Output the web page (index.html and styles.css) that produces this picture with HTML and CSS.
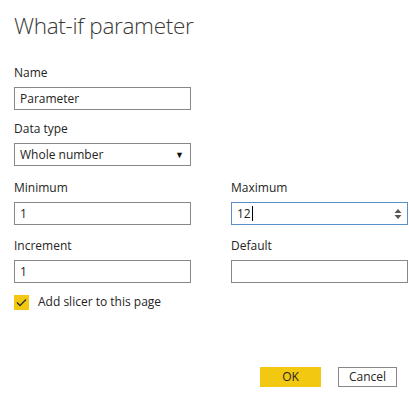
FILE: index.html
```html
<!DOCTYPE html>
<html>
<head>
<meta charset="utf-8">
<link rel="stylesheet" href="styles.css">
</head>
<body>
<div class="dialog">
  <h1 class="title">What-if parameter</h1>
  <div class="field name-field">
    <div class="label">Name</div>
    <div class="input">Parameter</div>
  </div>
  <div class="field">
    <div class="label">Data type</div>
    <div class="input select">Whole number<span class="caret">▼</span></div>
  </div>
  <div class="grid">
    <div class="field">
      <div class="label">Minimum</div>
      <div class="input">1</div>
    </div>
    <div class="field">
      <div class="label">Maximum</div>
      <div class="input focused">12<span class="cursor"></span>
        <svg class="spin" width="8" height="12" viewBox="0 0 8 12"><path d="M4 1 L7.5 5 H0.5 Z M4 11 L7.5 7 H0.5 Z" fill="#555"/></svg>
      </div>
    </div>
    <div class="field">
      <div class="label">Increment</div>
      <div class="input">1</div>
    </div>
    <div class="field">
      <div class="label">Default</div>
      <div class="input"></div>
    </div>
  </div>
  <div class="check-row">
    <span class="checkbox"><svg width="11" height="9" viewBox="0 0 11 9"><path d="M1 4.5 L4 7.5 L10 1.5" fill="none" stroke="#333" stroke-width="1.4"/></svg></span>
    <span>Add slicer to this page</span>
  </div>
  <div class="actions">
    <button class="btn ok">OK</button>
    <button class="btn cancel">Cancel</button>
  </div>
</div>
</body>
</html>
```
FILE: styles.css
```css
* { box-sizing: border-box; }
html, body { margin: 0; padding: 0; background: #fff; }
body {
  font-family: "Open Sans", "Noto Sans", sans-serif;
  font-size: 12px;
  color: #252423;
  width: 409px;
  height: 404px;
  overflow: hidden;
}
.dialog {
  padding: 9px 1px 0 14px;
}
.title {
  margin: 0 0 22px 0;
  font-weight: 300;
  font-size: 22.5px;
  line-height: 34px;
  color: #3b3a39;
  letter-spacing: -0.3px;
}
.field { width: 177px; }
.name-field { margin-bottom: 11px; }
.label {
  line-height: 16px;
  margin-bottom: 6px;
  color: #252423;
}
.input {
  height: 23px;
  border: 1px solid #8a8886;
  padding: 0 5px;
  line-height: 21px;
  position: relative;
  display: flex;
  align-items: center;
}
.select { justify-content: space-between; padding-right: 6px; }
.caret { font-size: 9px; color: #111; }
.grid {
  margin-top: 14px;
  display: grid;
  grid-template-columns: 177px 177px;
  column-gap: 40px;
  row-gap: 13px;
}
.focused { border-color: #5b8fc9; }
.cursor {
  display: inline-block;
  width: 1px;
  height: 15px;
  background: #000;
  margin-left: 1px;
}
.spin { position: absolute; right: 5px; top: 5px; }
.check-row {
  margin-top: 11px;
  display: flex;
  align-items: center;
  gap: 9px;
  line-height: 16px;
}
.checkbox {
  width: 15px;
  height: 15px;
  background: #f2c811;
  display: flex;
  align-items: center;
  justify-content: center;
}
.actions {
  margin-top: 57px;
  display: flex;
  justify-content: flex-end;
  gap: 17px;
  padding-right: 11px;
}
.btn {
  font-family: inherit;
  font-size: 12px;
  height: 20px;
  padding: 0;
  color: #252423;
  line-height: 18px;
}
.ok { width: 61px; background: #f2c811; border: 1px solid #f2c811; }
.cancel { width: 59px; background: #fff; border: 1px solid #8a8886; }
```
